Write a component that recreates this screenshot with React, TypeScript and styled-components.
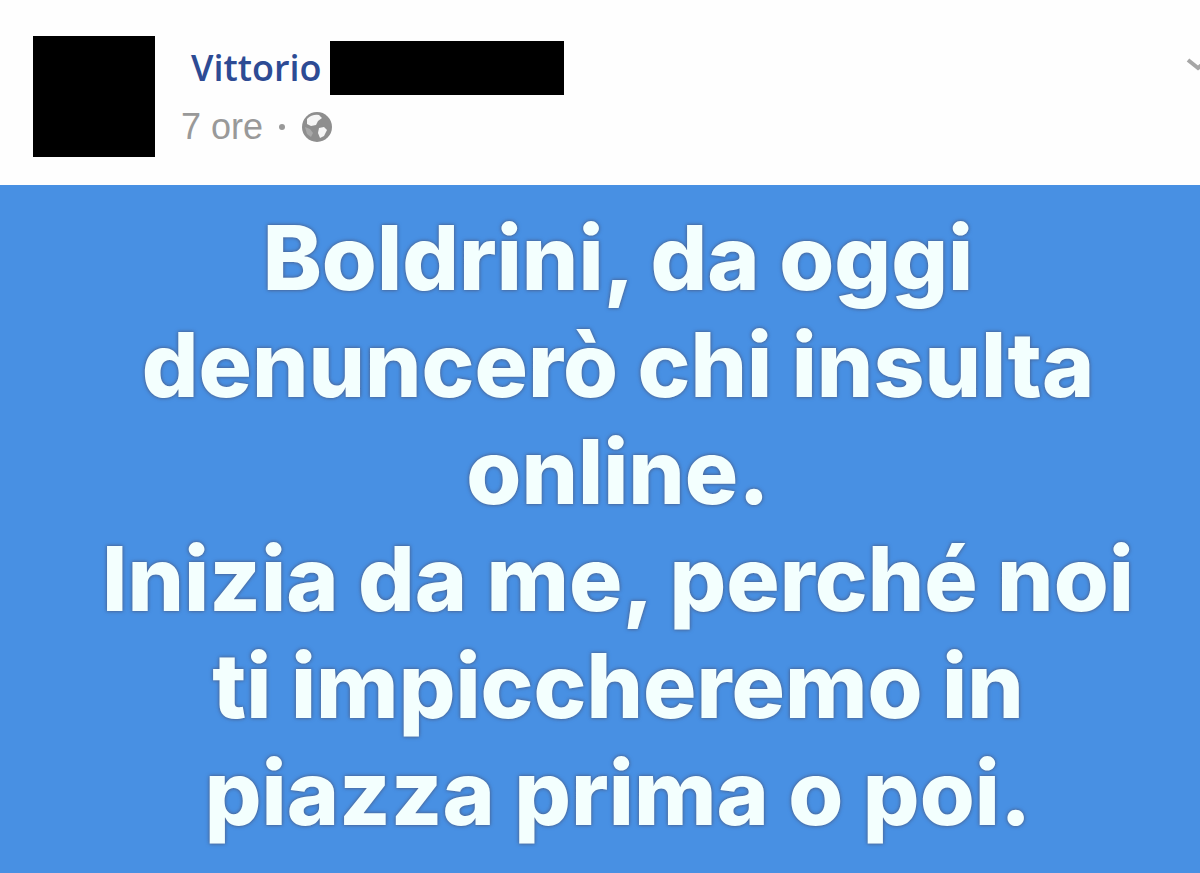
import React from "react";
import styled, { createGlobalStyle } from "styled-components";

const GlobalStyle = createGlobalStyle`
  * { box-sizing: border-box; }
  html, body, #root { height: 100%; }
  body { margin: 0; background: #fefefe; overflow-x: hidden; }
`;

const Post = styled.article`
  display: flex;
  flex-direction: column;
  min-height: 100%;
  overflow: hidden;
`;

const Header = styled.header`
  display: flex;
  align-items: flex-start;
  padding: 36px 0 28px 33px;
`;

const Avatar = styled.div`
  flex: none;
  width: 122px;
  height: 121px;
  background: #000;
`;

const Details = styled.div`
  flex: 1;
  min-width: 0;
  padding: 5px 0 0 26px;
`;

const NameRow = styled.div`
  display: flex;
  align-items: center;
  gap: 9px;
  padding-left: 10px;
`;

const AuthorLink = styled.a`
  color: #2d4b94;
  font: 600 36px/54px "Open Sans", sans-serif;
  text-decoration: none;
`;

const HiddenSurname = styled.span`
  width: 234px;
  height: 54px;
  background: #000;
`;

const Meta = styled.div`
  display: flex;
  align-items: center;
  gap: 16px;
  padding-top: 10px;
  color: #999;
  font: 400 36px/44px "Liberation Sans", sans-serif;
`;

const Dot = styled.span`
  width: 6px;
  height: 6px;
  border-radius: 50%;
  background: #999;
`;

const Globe = styled.svg`
  width: 32px;
  height: 32px;
`;

const MenuButton = styled.button`
  flex: none;
  display: flex;
  margin: 18px -14px 0 0;
  padding: 0;
  border: 0;
  background: none;
`;

const Message = styled.p`
  flex: 1;
  margin: 0;
  padding: 19px 0 19px 36px;
  background: #4890e3;
  color: #f3fffe;
  font: 800 89px/107px Inter, sans-serif;
  text-align: center;
  text-shadow: 0 0 3px #49679a, 0 0 4px #49679a;
`;

const lines = [
  "Boldrini, da oggi",
  "denuncerò chi insulta",
  "online.",
  "Inizia da me, perché noi",
  "ti impiccheremo in",
  "piazza prima o poi.",
];

export default function App() {
  return (
    <>
      <GlobalStyle />
      <Post>
        <Header>
          <Avatar />
          <Details>
            <NameRow>
              <AuthorLink href="#">Vittorio</AuthorLink>
              <HiddenSurname />
            </NameRow>
            <Meta>
              <span>7 ore</span>
              <Dot />
              <Globe viewBox="0 0 32 32" aria-hidden="true">
                <circle cx="16" cy="16" r="15" fill="#8e8e8e" />
                <path d="M6 8 Q11 3 18 4 L21 7 L17 10 L15 14 L10 15 L6 13 Z" fill="#f5f5f5" />
                <path d="M18 17 L23 16 L26 19 L23 25 L19 27 L17 22 Z" fill="#f5f5f5" />
                <path d="M4 16 L9 18 L12 22 L10 26 L6 23 Z" fill="#a8a8a8" />
              </Globe>
            </Meta>
          </Details>
          <MenuButton type="button" aria-label="Menu">
            <svg width="32" height="20" viewBox="0 0 32 20" fill="none" aria-hidden="true">
              <path d="M6 6 L16 14 L26 6" stroke="#a6a6a6" strokeWidth="4" />
            </svg>
          </MenuButton>
        </Header>
        <Message>
          {lines.map((line) => (
            <React.Fragment key={line}>
              {line}
              <br />
            </React.Fragment>
          ))}
        </Message>
      </Post>
    </>
  );
}
